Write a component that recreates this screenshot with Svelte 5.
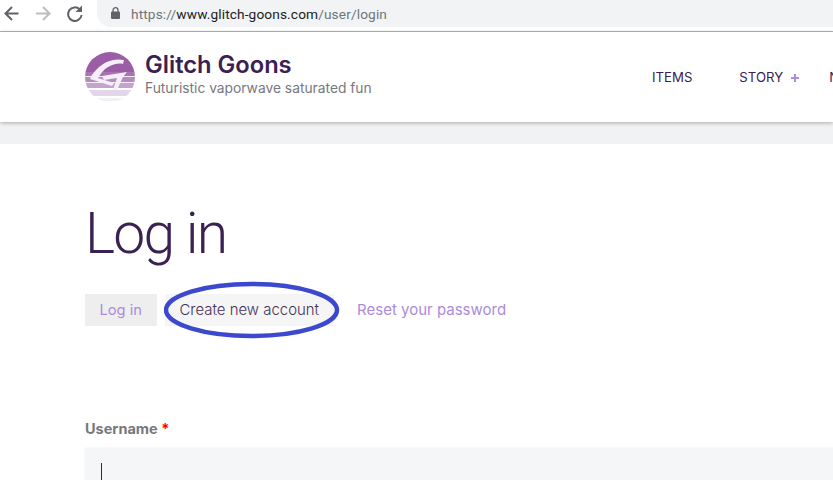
<script>
  let navItems = [
    { label: "ITEMS", plus: false },
    { label: "STORY", plus: true },
    { label: "NEWS", plus: false },
  ];
</script>

<div class="page">
  <!-- browser toolbar -->
  <div class="toolbar">
    <svg class="tool-icons" width="97" height="31" viewBox="0 0 97 31">
      <path d="M18.5 13.5H6M12 7L5.5 13.5L12 20" fill="none" stroke="#5f6368" stroke-width="2" />
      <path d="M36 13.5H49M43 7L49.5 13.5L43 20" fill="none" stroke="#bcbec1" stroke-width="2" />
      <path d="M79.8 9.5A6.8 6.8 0 1 0 81.6 15" fill="none" stroke="#5f6368" stroke-width="2" />
      <path d="M75.5 12H82V5.5Z" fill="#5f6368" />
    </svg>
    <div class="urlbar">
      <svg class="lock" width="9" height="12" viewBox="0 0 9 12">
        <path d="M2 5V3.2a2.5 2.5 0 0 1 5 0V5" fill="none" stroke="#5f6368" stroke-width="1.3" />
        <rect x="0" y="4.5" width="9" height="7.5" rx="1" fill="#5f6368" />
      </svg>
      <span class="url"><span class="dim">https://</span>www.glitch-goons.com<span class="dim">/user/login</span></span>
    </div>
  </div>

  <!-- site header -->
  <header class="site-header">
    <div class="brand">
      <svg class="logo" width="50" height="50" viewBox="0 0 50 50">
        <defs>
          <clipPath id="disc"><circle cx="25" cy="25" r="25" /></clipPath>
        </defs>
        <g clip-path="url(#disc)">
          <rect width="50" height="20" fill="#9a5da6" />
          <rect y="20" width="50" height="4" fill="#a874b0" />
          <rect y="24" width="50" height="1" fill="#f4edf6" />
          <rect y="25" width="50" height="5" fill="#b48cc0" />
          <rect y="30" width="50" height="1" fill="#f4edf6" />
          <rect y="31" width="50" height="5" fill="#c4a4cf" />
          <rect y="36" width="50" height="2" fill="#fff" />
          <rect y="38" width="50" height="6" fill="#e4d6ea" />
          <rect y="44" width="50" height="2" fill="#fff" />
          <rect y="46" width="50" height="3" fill="#f4eef6" />
        </g>
        <path d="M39 8C30 6 21 9 14 15C10 19 6 23 5 27L27 34L29 31L13 26C16 21 20 16 25 14C29 12 34 11 38 12Z" fill="#f6eef8" />
        <path d="M17 24L42 20L38 25L32 38L28 38L32 26L19 28Z" fill="#f6eef8" />
      </svg>
      <div class="brand-text">
        <div class="site-name">Glitch Goons</div>
        <div class="slogan">Futuristic vaporwave saturated fun</div>
      </div>
    </div>
    <nav class="main-nav">
      {#each navItems as item}
        <span class="nav-item" class:has-plus={item.plus}>
          {item.label}
          {#if item.plus}<span class="plus"></span>{/if}
        </span>
      {/each}
    </nav>
  </header>
  <div class="band"></div>

  <main class="content">
    <h1>Log in</h1>
    <div class="tabs">
      <span class="tab active">Log in</span>
      <span class="tab circled">
        Create new account
        <svg class="ring" width="179" height="59" viewBox="0 0 179 59">
          <ellipse cx="87.5" cy="29" rx="85.5" ry="26" fill="none" stroke="#3c48ce" stroke-width="4.5" />
        </svg>
      </span>
      <span class="tab plain">Reset your password</span>
    </div>
    <div class="field">
      <div class="label">Username <span class="req">*</span></div>
      <div class="input"><span class="caret"></span></div>
    </div>
  </main>
</div>

<style>
  :global(body) {
    margin: 0;
    background: #fff;
    overflow: hidden;
  }

  .page {
    width: 833px;
    height: 480px;
    overflow: hidden;
    font-family: "Inter", "Liberation Sans", sans-serif;
  }

  .toolbar {
    display: flex;
    height: 31px;
    border-bottom: 1px solid #b4b4b6;
  }

  .tool-icons {
    flex: none;
  }

  .urlbar {
    flex: 1;
    height: 27px;
    display: flex;
    align-items: center;
    padding-left: 14px;
    background: #f1f3f4;
    border-radius: 0 0 0 14px;
  }

  .lock {
    margin-right: 11px;
    margin-top: -1px;
  }

  .url {
    font-family: "Roboto", sans-serif;
    font-size: 13.7px;
    color: #202124;
    letter-spacing: 0.12px;
  }

  .dim {
    color: #70757a;
  }

  .site-header {
    height: 90px;
    display: flex;
    align-items: flex-start;
    justify-content: space-between;
    padding-left: 85px;
    background: #fff;
    box-shadow: 0 1px 4px rgba(0, 0, 0, 0.3);
    position: relative;
    white-space: nowrap;
  }

  .brand {
    display: flex;
    gap: 10px;
    padding-top: 20px;
  }

  .site-name {
    font-size: 23.7px;
    line-height: 26px;
    font-weight: 600;
    color: #3a2152;
  }

  .slogan {
    font-size: 13.8px;
    line-height: 20px;
    color: #77777f;
  }

  .main-nav {
    display: flex;
    gap: 47px;
    padding-top: 37px;
    width: 181px;
    flex: none;
    overflow: hidden;
  }

  .nav-item {
    font-size: 13.2px;
    line-height: 17px;
    color: #3a2152;
    display: flex;
    align-items: center;
    gap: 8px;
  }

  .has-plus {
    margin-right: -17px;
  }

  .plus {
    width: 8px;
    height: 8px;
    background:
      linear-gradient(#ab8bdc, #ab8bdc) center / 8px 2px no-repeat,
      linear-gradient(#ab8bdc, #ab8bdc) center / 2px 8px no-repeat;
  }

  .band {
    height: 22px;
    background: #f1f2f4;
  }

  .content {
    padding: 0 0 0 85px;
  }

  h1 {
    margin: 58px 0 0;
    font-family: "Roboto", sans-serif;
    font-size: 57px;
    line-height: 64px;
    font-weight: 300;
    letter-spacing: -1.7px;
    color: #3a2152;
  }

  .tabs {
    display: flex;
    align-items: center;
    margin-top: 28px;
    font-size: 14.7px;
    white-space: nowrap;
  }

  .tab {
    height: 32px;
    line-height: 32px;
    padding: 0 15px;
    color: #ab8bdc;
  }

  .active {
    background: #eeeeee;
    padding: 0 14.5px;
    margin-right: 8px;
  }

  .circled {
    position: relative;
    background: #f5f5f5;
    color: #44305a;
    font-size: 14.95px;
    font-weight: 300;
    margin-right: 8px;
  }

  .plain {
    font-size: 15px;
  }

  .ring {
    position: absolute;
    left: -1px;
    top: -13px;
  }

  .field {
    margin-top: 93px;
  }

  .label {
    font-size: 14.5px;
    line-height: 20px;
    font-weight: 700;
    color: #77777a;
  }

  .req {
    color: #f00;
  }

  .input {
    height: 60px;
    margin-top: 9px;
    padding: 15px 0 0 16px;
    background: #f5f6f8;
    border-radius: 2px 0 0 0;
    box-shadow: 0 0 2px rgba(0, 0, 0, 0.1);
  }

  .caret {
    display: block;
    width: 1px;
    height: 18px;
    background: #3a2152;
  }
</style>
